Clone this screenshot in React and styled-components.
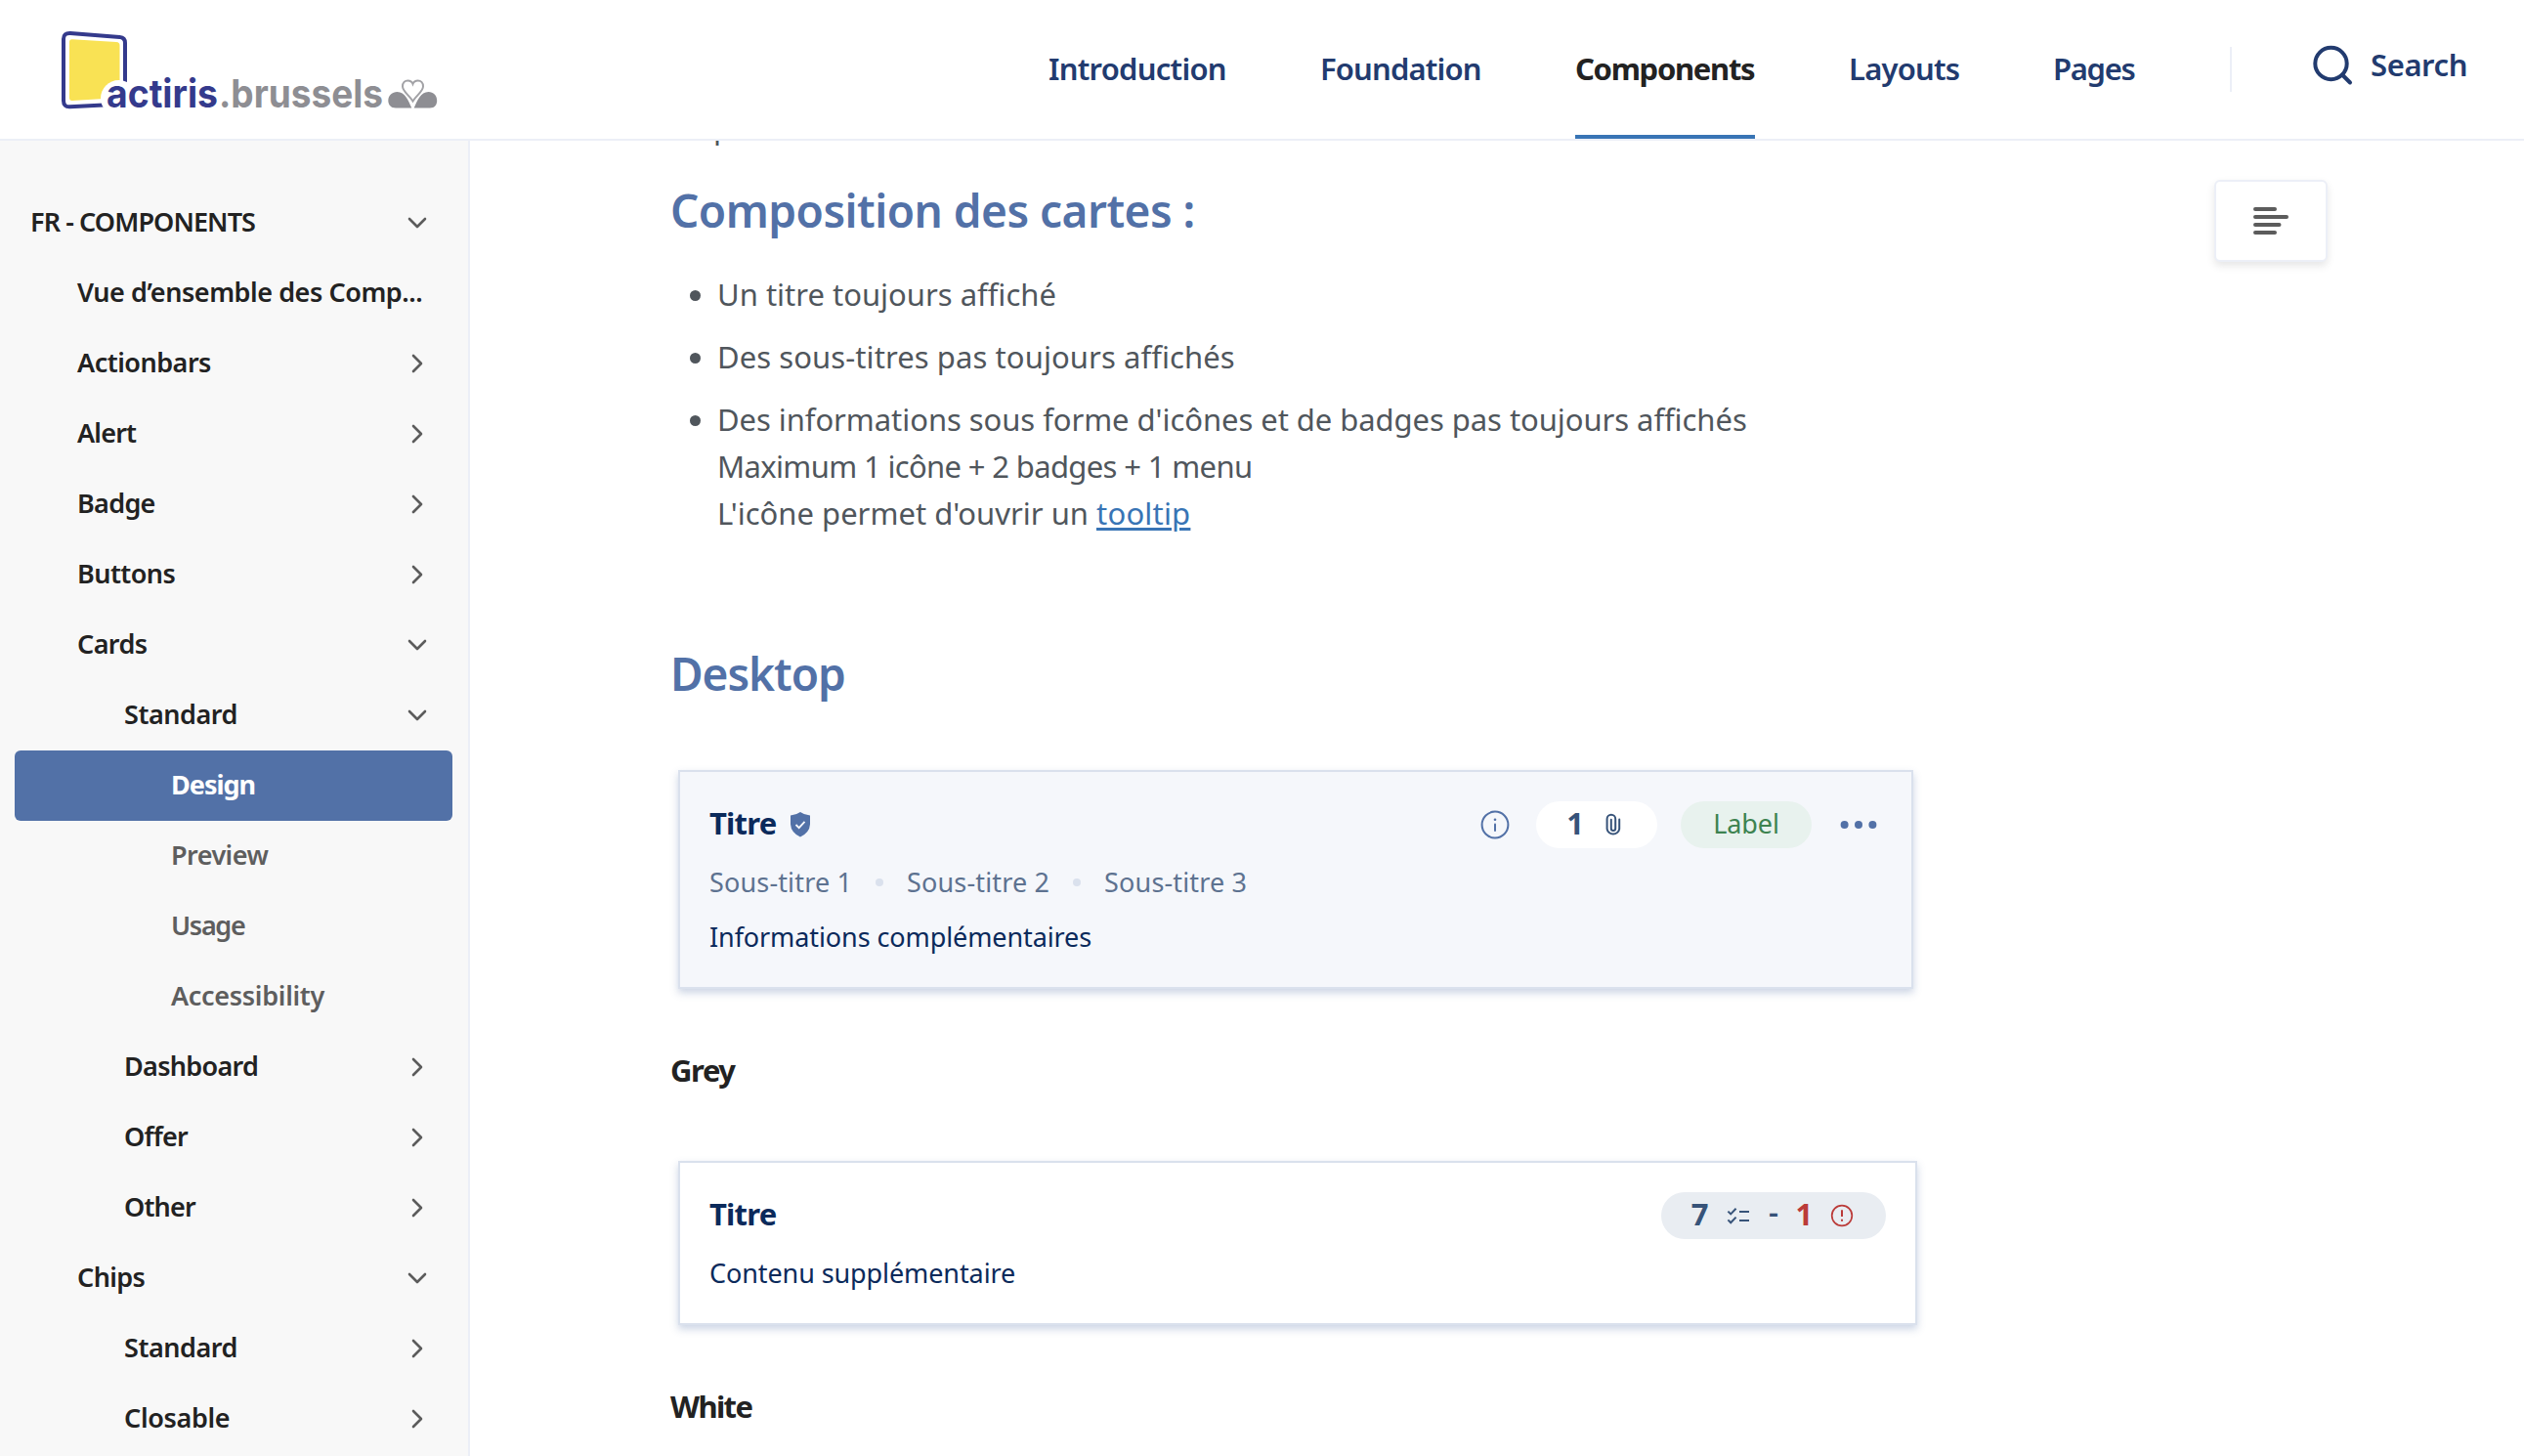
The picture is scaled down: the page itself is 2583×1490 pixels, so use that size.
import React, { useState } from "react";
import styled, { createGlobalStyle } from "styled-components";

const GlobalStyle = createGlobalStyle`
	* {
		box-sizing: border-box;
	}

	body {
		margin: 0;
		background: #fff;
		color: #222;
		font-family: "Noto Sans", "Open Sans", sans-serif;
	}

	svg {
		display: block;
		flex-shrink: 0;
	}
`;

const Page = styled.div`
	display: flex;
	flex-direction: column;
	height: 1490px;
	overflow: hidden;
`;

/* header */

const Header = styled.header`
	display: flex;
	justify-content: space-between;
	flex-shrink: 0;
	height: 144px;
	padding: 0 57px 0 60px;
	border-bottom: 2px solid #eceff7;
`;

const LogoLink = styled.a`
	padding-top: 28px;
`;

const HeaderRight = styled.div`
	display: flex;
	align-items: center;
`;

const Nav = styled.nav`
	display: flex;
	gap: 96px;
	height: 142px;
`;

const NavItem = styled.a`
	width: ${(props) => props.$width}px;
	height: 142px;
	line-height: 140px;
	border-bottom: 4px solid ${(props) => (props.$active ? "#3874b5" : "transparent")};
	color: ${(props) => (props.$active ? "#222" : "#223b6f")};
	font-size: 31px;
	font-weight: ${(props) => (props.$active ? 700 : 600)};
	letter-spacing: ${(props) => props.$track}px;
	white-space: nowrap;
`;

const Divider = styled.span`
	width: 2px;
	height: 46px;
	margin: 0 82px 0 97px;
	background: #eceff7;
`;

const SearchButton = styled.a`
	display: flex;
	align-items: center;
	gap: 18px;
	height: 48px;
	margin-bottom: 8px;
	color: #223b6f;
	font-size: 31px;
	font-weight: 600;
	letter-spacing: -0.4px;
	line-height: 46px;
`;

const SearchText = styled.span`
	width: 100px;
	height: 48px;
`;

/* sidebar */

const Body = styled.div`
	display: flex;
	flex: 1;
	min-height: 0;
`;

const Sidebar = styled.aside`
	flex-shrink: 0;
	width: 481px;
	padding: 48px 16px 0 15px;
	border-right: 2px solid #eceff7;
	background: #f8f8f8;
	overflow: hidden;
`;

const MenuRow = styled.div`
	display: flex;
	align-items: center;
	justify-content: space-between;
	height: 72px;
	padding-right: 24px;
	padding-left: ${(props) => [16, 64, 112, 160][props.$level]}px;
	border-radius: 6px;
	background: ${(props) => (props.$active ? "#5271a7" : "transparent")};
	color: ${(props) => (props.$active ? "#fff" : props.$level === 3 ? "#5e5e5e" : "#222")};
	font-size: 27px;
	font-weight: ${(props) => (props.$active ? 700 : 600)};
`;

const MenuLabel = styled.span`
	padding-bottom: 3px;
	letter-spacing: ${(props) => props.$track ?? -0.45}px;
	white-space: nowrap;
`;

/* content */

const Content = styled.main`
	flex: 1;
	min-width: 0;
	padding-left: 205px;
	overflow: hidden;
`;

const Column = styled.div`
	width: 1276px;
`;

const ContentLayout = styled.div`
	display: flex;
	align-items: flex-start;
	gap: 304px;
`;

const LastLine = styled.p`
	margin: -38px 0 0;
	padding-left: 44px;
	color: #50565c;
	font-size: 31px;
	line-height: 48px;
`;

const Heading = styled.h2`
	margin: ${(props) => props.$top}px 0 0;
	color: #5271a7;
	font-size: 46px;
	font-weight: 600;
	letter-spacing: ${(props) => props.$track}px;
	line-height: 60px;
`;

const List = styled.ul`
	display: flex;
	flex-direction: column;
	gap: 16px;
	margin: 32px 0 0;
	padding: 0;
	list-style: none;
`;

const Item = styled.li`
	display: flex;
	color: #50565c;
	font-size: 31px;
	line-height: 48px;
	white-space: nowrap;

	&::before {
		content: "";
		flex-shrink: 0;
		width: 11px;
		height: 11px;
		margin: 20px 17px 0 20px;
		border-radius: 50%;
		background: #50565c;
	}
`;

const TextLine = styled.div`
	letter-spacing: ${(props) => props.$track || 0}px;
`;

const Link = styled.a`
	color: #3874b5;
	letter-spacing: 0.2px;
	text-decoration: underline;
	text-decoration-thickness: 3px;
	text-underline-offset: 3px;
`;

const Caption = styled.h3`
	margin: 59px 0 0;
	font-size: 31px;
	font-weight: 700;
	letter-spacing: ${(props) => props.$track}px;
	line-height: 48px;
`;

const TocButton = styled.button`
	display: flex;
	align-items: center;
	justify-content: center;
	width: 116px;
	height: 84px;
	margin-top: 40px;
	padding: 0;
	border: 2px solid #eceff7;
	border-radius: 6px;
	background: #fff;
	box-shadow: 0 4px 8px rgba(0, 0, 0, 0.1);
`;

/* card */

const Card = styled.section`
	width: ${(props) => props.$width}px;
	height: ${(props) => props.$height}px;
	margin: 69px 0 0 8px;
	padding: 30px;
	border: 2px solid #dae1ed;
	background: ${(props) => (props.$grey ? "#f5f7fb" : "#fff")};
	box-shadow: 0 4px 8px rgba(82, 113, 167, 0.3);
	color: #0b2a5b;
`;

const CardHead = styled.div`
	display: flex;
	align-items: center;
	justify-content: space-between;
	height: 48px;
`;

const CardTitle = styled.div`
	display: flex;
	align-items: center;
	gap: 14px;
	font-size: 31px;
	font-weight: 700;
	letter-spacing: -0.8px;
	line-height: 44px;
`;

const TitleText = styled.span`
	padding-bottom: 4px;
`;

const CardActions = styled.div`
	display: flex;
	align-items: center;
	gap: 24px;
`;

const Subtitles = styled.div`
	display: flex;
	align-items: center;
	margin-top: 15px;
	color: #5d7290;
	font-size: 27px;
	letter-spacing: 0.15px;
	line-height: 40px;
`;

const Dot = styled.span`
	width: 8px;
	height: 8px;
	margin: 0 24px;
	border-radius: 50%;
	background: #dae1ed;
`;

const CardText = styled.div`
	margin-top: ${(props) => props.$top}px;
	font-size: 27px;
	letter-spacing: -0.1px;
	line-height: 40px;
`;

const badgeColors = {
	white: "background: #fff; color: #375379;",
	green: "background: #e8f2ee; color: #3d8350;",
	grey: "background: #e9edf2; color: #375379;",
};

const Badge = styled.div`
	display: flex;
	align-items: center;
	justify-content: center;
	gap: 16px;
	width: ${(props) => props.$width}px;
	height: 48px;
	border-radius: 24px;
	font-size: 27px;
	line-height: 46px;
	${(props) => badgeColors[props.$kind]}
`;

const BadgeLabel = styled.span`
	height: 48px;
	letter-spacing: -0.1px;
`;

const Count = styled.span`
	height: 48px;
	color: ${(props) => (props.$alert ? "#bb3b39" : "inherit")};
	font-size: 31px;
	font-weight: 700;
	line-height: 44px;
`;

const Dash = styled.span`
	width: 13px;
	height: 48px;
	font-size: 31px;
	font-weight: 600;
	line-height: 40px;
	text-align: center;
`;

/* icons */

const Logo = () => (
	<svg width="400" height="110" viewBox="0 0 400 110">
		<path d="M14 12.2 L59 15 Q62.5 15.3 62.5 18.5 V72 L14 75 Q11 75.2 11 72 V15 Q11 12 14 12.2Z" fill="#f9e254" />
		<path d="M68 56 V16 Q68 10.4 62.5 10 L12 6 Q5 5.6 5 12 V75 Q5 81.6 11.5 81.3 L46 79.4" fill="none" stroke="#343a8c" strokeWidth="4" />
		<circle cx="61.5" cy="72.5" r="18.5" fill="#fff" />
		<text x="49" y="82" fill="#343a8c" fontFamily="Inter, sans-serif" fontSize="39.5" fontWeight="700" textLength="114" lengthAdjust="spacingAndGlyphs">actiris</text>
		<text x="164" y="82" fill="#8e8e93" fontFamily="Inter, sans-serif" fontSize="39.5" fontWeight="650" textLength="168" lengthAdjust="spacingAndGlyphs">.brussels</text>
		<path d="M362.5 75.5 C358.5 69 352 65.5 352 60.5 C352 56.5 354.5 54.5 357.3 54.5 C360 54.5 361.7 56 362.5 58 C363.3 56 365 54.5 367.7 54.5 C370.5 54.5 373 56.5 373 60.5 C373 65.5 366.5 69 362.5 75.5Z" fill="none" stroke="#a2a2a6" strokeWidth="2" />
		<path d="M345 82.5 C340 82.5 337.3 79 337.3 75 C337.3 69.5 341.5 66 346.5 66 C354.5 66 358 75 361.3 82.5Z" fill="#8e8e93" />
		<path d="M380 82.5 C385 82.5 387.2 79 387.2 75 C387.2 69.5 383.5 66 378.5 66 C370.5 66 367 75 363.7 82.5Z" fill="#8e8e93" />
	</svg>
);

const SearchIcon = () => (
	<svg width="42" height="42" viewBox="0 0 42 42" fill="none" stroke="#223b6f" strokeWidth="4" strokeLinecap="round">
		<circle cx="19.5" cy="19" r="16.2" />
		<path d="M31 30.5 L39 38.5" />
	</svg>
);

const Chevron = ({ open }) => (
	<svg width="24" height="24" viewBox="0 0 24 24" fill="none" stroke="#5c5c5c" strokeWidth="2.6" strokeLinecap="round" strokeLinejoin="round">
		<path d={open ? "M4 8 L12 16 L20 8" : "M8 4 L16 12 L8 20"} />
	</svg>
);

const TocIcon = () => (
	<svg width="36" height="28" viewBox="0 0 36 28" stroke="#5c5c5c" strokeWidth="4" strokeLinecap="round">
		<path d="M2 2 H22 M2 10 H34 M2 18 H26.5 M2 26 H22" />
	</svg>
);

const ShieldIcon = () => (
	<svg width="22" height="28" viewBox="0 0 22 28">
		<path d="M11 1 Q15.5 4.2 21 4.6 V13.5 Q20.5 22 11 26.5 Q1.5 22 1 13.5 V4.6 Q6.5 4.2 11 1Z" fill="#5271a7" />
		<path d="M6.5 14 L9.7 17.2 L15.5 10.8" fill="none" stroke="#f5f7fb" strokeWidth="1.8" />
	</svg>
);

const InfoIcon = () => (
	<svg width="36" height="36" viewBox="0 0 36 36" fill="none" stroke="#5271a7" strokeWidth="2">
		<circle cx="18" cy="18" r="13.4" />
		<path d="M18 17.5 V24" strokeLinecap="round" />
		<circle cx="18" cy="12.7" r="1.3" fill="#5271a7" stroke="none" />
	</svg>
);

const ClipIcon = () => (
	<svg width="28" height="28" viewBox="0 0 28 28" fill="none" stroke="#375379" strokeWidth="2" strokeLinecap="round">
		<path d="M20.2 8.5 V18.2 A6.4 6.4 0 0 1 7.6 18.2 V8 A4.3 4.3 0 0 1 16.2 8 V17.8 A2.2 2.2 0 0 1 11.8 17.8 V8.8" />
	</svg>
);

const DotsIcon = () => (
	<svg width="48" height="48" viewBox="0 0 48 48" fill="#5271a7">
		<circle cx="9.6" cy="24" r="4" />
		<circle cx="24" cy="24" r="4" />
		<circle cx="38.4" cy="24" r="4" />
	</svg>
);

const TasksIcon = () => (
	<svg width="28" height="28" viewBox="0 0 28 28" fill="none" stroke="#375379" strokeWidth="2">
		<path d="M3.4 9.6 L6.2 12.4 L11.6 6.8 M3.4 18.4 L6.2 21.2 L11.6 15.6" />
		<path d="M15 10.1 H25 M15 18.9 H25" />
	</svg>
);

const AlertIcon = () => (
	<svg width="28" height="28" viewBox="0 0 28 28" fill="none" stroke="#bb3b39" strokeWidth="1.7">
		<circle cx="14" cy="14" r="10.3" />
		<path d="M14 8.2 V15" strokeWidth="2" />
		<path d="M14 17.8 V19.8" strokeWidth="2" />
	</svg>
);

const navItems = [
	{ label: "Introduction", width: 182, track: -0.75 },
	{ label: "Foundation", width: 165, track: -0.85 },
	{ label: "Components", width: 184, track: -1.3 },
	{ label: "Layouts", width: 113, track: -0.8 },
	{ label: "Pages", width: 84, track: -1.3 },
];

//arrow: "down" = open, "right" = closed, none = simple link
const menu = [
	{ label: "FR - COMPONENTS", level: 0, arrow: "down", track: -0.9 },
	{ label: "Vue d’ensemble des Comp...", level: 1, track: -0.45 },
	{ label: "Actionbars", level: 1, arrow: "right", track: -0.5 },
	{ label: "Alert", level: 1, arrow: "right", track: -0.8 },
	{ label: "Badge", level: 1, arrow: "right", track: -0.7 },
	{ label: "Buttons", level: 1, arrow: "right", track: -0.55 },
	{ label: "Cards", level: 1, arrow: "down", track: -0.6 },
	{ label: "Standard", level: 2, arrow: "down" },
	{ label: "Design", level: 3, track: -1 },
	{ label: "Preview", level: 3, track: -0.55 },
	{ label: "Usage", level: 3, track: -1.3 },
	{ label: "Accessibility", level: 3, track: -0.3 },
	{ label: "Dashboard", level: 2, arrow: "right", track: -0.7 },
	{ label: "Offer", level: 2, arrow: "right", track: -0.8 },
	{ label: "Other", level: 2, arrow: "right", track: -0.8 },
	{ label: "Chips", level: 1, arrow: "down", track: -0.6 },
	{ label: "Standard", level: 2, arrow: "right" },
	{ label: "Closable", level: 2, arrow: "right", track: -0.35 },
];

const App = () => {
	const [tab, setTab] = useState("Components");
	const [active, setActive] = useState(8);

	return (
		<Page>
			<GlobalStyle />
			<Header>
				<LogoLink>
					<Logo />
				</LogoLink>
				<HeaderRight>
					<Nav>
						{navItems.map((item) => (
							<NavItem
								key={item.label}
								$width={item.width}
								$track={item.track}
								$active={tab === item.label}
								onClick={() => setTab(item.label)}
							>
								{item.label}
							</NavItem>
						))}
					</Nav>
					<Divider />
					<SearchButton>
						<SearchIcon />
						<SearchText>Search</SearchText>
					</SearchButton>
				</HeaderRight>
			</Header>
			<Body>
				<Sidebar>
					{menu.map((item, index) => (
						<MenuRow
							key={index}
							$level={item.level}
							$active={active === index}
							onClick={() => !item.arrow && setActive(index)}
						>
							<MenuLabel $track={item.track}>{item.label}</MenuLabel>
							{item.arrow && <Chevron open={item.arrow === "down"} />}
						</MenuRow>
					))}
				</Sidebar>
				<Content>
					<ContentLayout>
						<Column>
							<LastLine>p</LastLine>
							<Heading $top={31} $track={-0.53}>Composition des cartes :</Heading>
							<List>
								<Item>
									<TextLine>Un titre toujours affiché</TextLine>
								</Item>
								<Item>
									<TextLine $track={0.08}>Des sous-titres pas toujours affichés</TextLine>
								</Item>
								<Item>
									<div>
										<TextLine $track={-0.06}>
											Des informations sous forme d'icônes et de badges pas toujours affichés
										</TextLine>
										<TextLine $track={-0.65}>Maximum 1 icône + 2 badges + 1 menu</TextLine>
										<TextLine>
											L'icône permet d'ouvrir un <Link>tooltip</Link>
										</TextLine>
									</div>
								</Item>
							</List>
							<Heading $top={110} $track={-1.05}>Desktop</Heading>
							<Card $width={1264} $height={224} $grey>
								<CardHead>
									<CardTitle>
										<TitleText>Titre</TitleText>
										<ShieldIcon />
									</CardTitle>
									<CardActions>
										<InfoIcon />
										<Badge $kind="white" $width={124}>
											<Count>1</Count>
											<ClipIcon />
										</Badge>
										<Badge $kind="green" $width={134}>
											<BadgeLabel>Label</BadgeLabel>
										</Badge>
										<DotsIcon />
									</CardActions>
								</CardHead>
								<Subtitles>
									<span>Sous-titre 1</span>
									<Dot />
									<span>Sous-titre 2</span>
									<Dot />
									<span>Sous-titre 3</span>
								</Subtitles>
								<CardText $top={16}>Informations complémentaires</CardText>
							</Card>
							<Caption $track={-1.4}>Grey</Caption>
							<Card $width={1268} $height={168}>
								<CardHead>
									<CardTitle>
										<TitleText>Titre</TitleText>
									</CardTitle>
									<Badge $kind="grey" $width={230}>
										<Count>7</Count>
										<TasksIcon />
										<Dash>-</Dash>
										<Count $alert>1</Count>
										<AlertIcon />
									</Badge>
								</CardHead>
								<CardText $top={15}>Contenu supplémentaire</CardText>
							</Card>
							<Caption $track={-1.6}>White</Caption>
						</Column>
						<TocButton>
							<TocIcon />
						</TocButton>
					</ContentLayout>
				</Content>
			</Body>
		</Page>
	);
};

export default App;
